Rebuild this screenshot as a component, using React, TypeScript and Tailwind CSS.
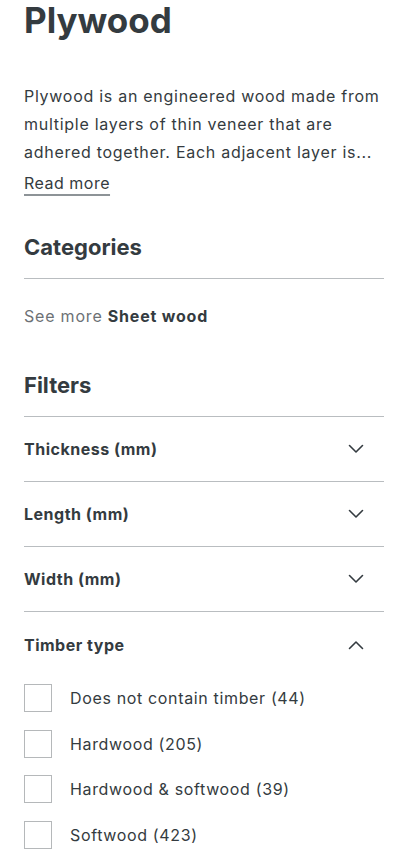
import React from "react";

function Chevron({ up }: { up?: boolean }) {
  return (
    <svg width="16" height="10" viewBox="0 0 16 10" fill="none" className="mr-[20px]">
      <path
        d={up ? "M1.5 8.5 L8 2 L14.5 8.5" : "M1.5 1.5 L8 8 L14.5 1.5"}
        stroke="#343b40"
        strokeWidth="1.6"
        strokeLinecap="round"
        strokeLinejoin="round"
      />
    </svg>
  );
}

function FilterRow({ label, open }: { label: string; open?: boolean }) {
  return (
    <div className={"flex h-[65px] items-center justify-between " + (open ? "" : "border-b border-[#b9bdc0]")}>
      <span className="text-[16px] font-bold tracking-[0.5px]">{label}</span>
      <Chevron up={open} />
    </div>
  );
}

const timber = [
  "Does not contain timber (44)",
  "Hardwood (205)",
  "Hardwood & softwood (39)",
  "Softwood (423)",
];

export default function App() {
  return (
    <div className="w-[400px] min-h-[868px] bg-white pl-6 pr-4 font-['Inter',sans-serif] text-[#343b40]">
      <h1 className="text-[35px] font-bold leading-[40px]">Plywood</h1>

      <p className="mt-[42px] text-[16px] leading-[28px] tracking-[0.72px]">
        Plywood is an engineered wood made from
        <br />
        multiple layers of thin veneer that are
        <br />
        adhered together. Each adjacent layer is...
      </p>
      <a
        href="#"
        className="mt-[3px] block w-fit text-[16px] leading-[28px] tracking-[0.5px] underline decoration-[#8d9397] decoration-[1.5px] underline-offset-[5px]"
      >
        Read more
      </a>

      <h2 className="mt-[36px] border-b border-[#b9bdc0] pb-[17px] text-[22px] font-bold leading-[28px]">Categories</h2>
      <div className="mt-[25px] text-[16px] leading-[24px] tracking-[0.8px]">
        <span className="text-[#6d7175]">See more </span>
        <span className="font-bold">Sheet wood</span>
      </div>

      <h2 className="mt-[43px] border-b border-[#b9bdc0] pb-[17px] text-[22px] font-bold leading-[28px]">Filters</h2>
      <FilterRow label="Thickness (mm)" />
      <FilterRow label="Length (mm)" />
      <FilterRow label="Width (mm)" />
      <FilterRow label="Timber type" open />

      <ul className="mt-[7px] flex flex-col gap-[17.7px]">
        {timber.map((t) => (
          <li key={t} className="flex items-center gap-[18px]">
            <span className="h-[28px] w-[28px] shrink-0 border border-[#b5b8ba] bg-white" />
            <span className="text-[16px] leading-[28px] tracking-[0.65px]">{t}</span>
          </li>
        ))}
      </ul>
    </div>
  );
}
